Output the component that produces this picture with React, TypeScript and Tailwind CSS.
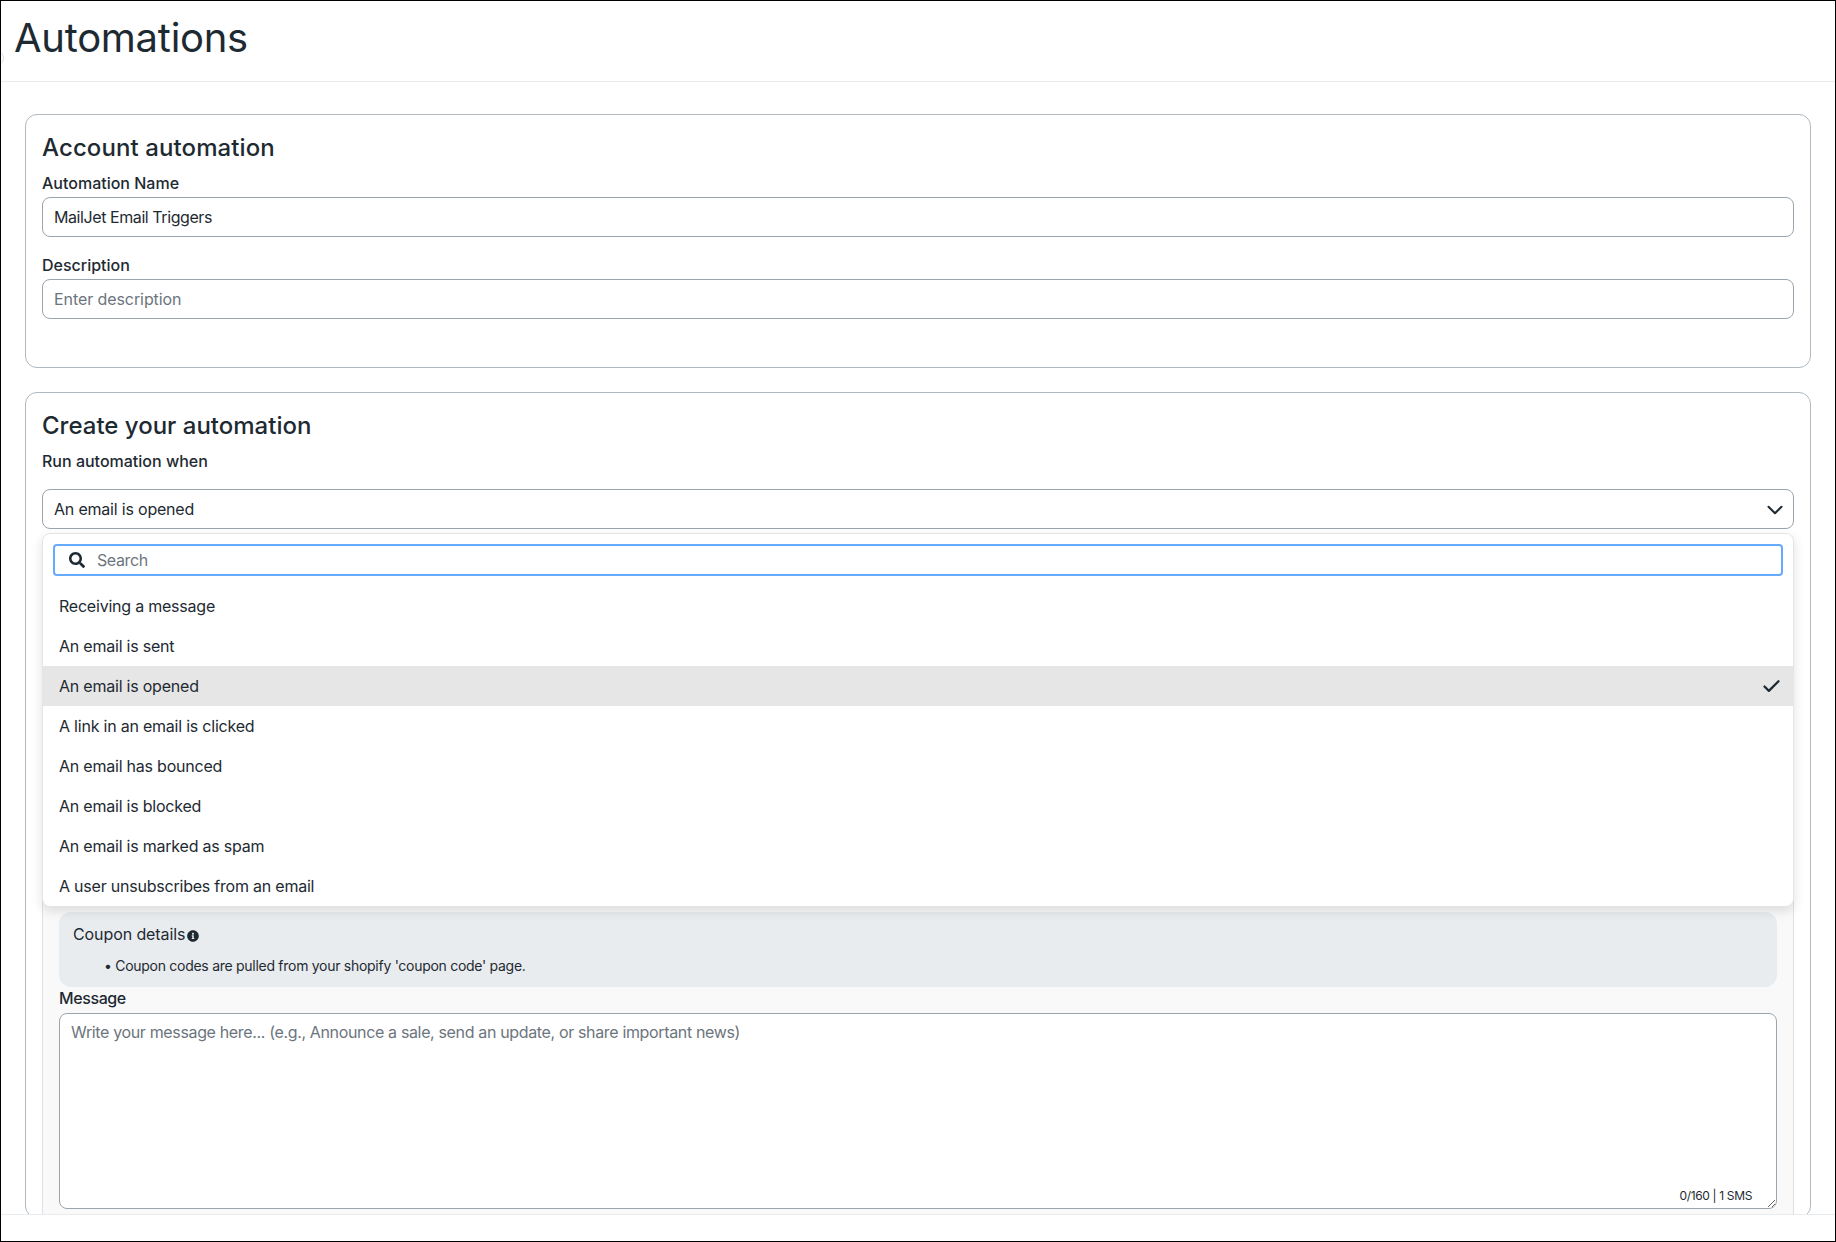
import { Check, ChevronDown } from 'lucide-react';

const triggers = [
  'Receiving a message',
  'An email is sent',
  'An email is opened',
  'A link in an email is clicked',
  'An email has bounced',
  'An email is blocked',
  'An email is marked as spam',
  'A user unsubscribes from an email',
];

const fieldClass =
  'block h-10 w-full rounded-[8px] border border-[#9aa5ae] bg-white px-[11px] text-[16px] text-[#1e2a32] placeholder:text-[#6c757d] outline-none';

export default function App() {
  return (
    <div className="relative flex h-[1242px] w-[1836px] flex-col overflow-hidden border border-black bg-white font-['Inter',sans-serif] text-[#1e2a32]">
      <div className="absolute left-[-13px] top-[49px] h-4 w-4 rounded-full border border-[#dee2e6]" />
      <header className="flex h-[81px] shrink-0 items-center border-b border-[#e9ecef] pl-[13px] pb-[7px]">
        <h1 className="text-[40px] font-normal leading-none tracking-[-0.27px]">Automations</h1>
      </header>

      <main className="flex min-h-0 flex-1 flex-col gap-[24px] overflow-hidden px-[24px] pt-[32px]">
        <section className="h-[254px] shrink-0 rounded-[12px] border border-[#b0b8c0] px-[16px] pt-[17px]">
          <h2 className="text-[24px] font-medium leading-[32px] tracking-[0.1px]">Account automation</h2>
          <label className="mt-[7px] block text-[16px] font-medium leading-[24px]">Automation Name</label>
          <input className={`mt-[2px] tracking-[-0.42px] ${fieldClass}`} readOnly value="MailJet Email Triggers" />
          <label className="mt-[16px] block text-[16px] font-medium leading-[24px]">Description</label>
          <input className={`mt-[2px] tracking-[-0.08px] ${fieldClass}`} readOnly placeholder="Enter description" />
        </section>

        <section className="relative shrink-0 rounded-[12px] border border-[#b0b8c0] px-[16px] pt-[17px]">
          <h2 className="text-[24px] font-medium leading-[32px]">Create your automation</h2>
          <label className="mt-[7px] block text-[16px] font-medium leading-[24px]">Run automation when</label>
          <div className="relative mt-[16px]">
            <div className="flex h-10 items-center justify-between rounded-[8px] border border-[#9aa5ae] bg-white pl-[11px] pr-[5px] text-[16px]">
              <span className="tracking-[-0.2px]">An email is opened</span>
              <ChevronDown size={26} strokeWidth={1.9} className="mt-[1px]" />
            </div>

            <div className="absolute left-0 right-0 top-[44px] z-10 rounded-[8px] border border-[#e3e6e9] bg-white shadow-[0_4px_12px_rgba(0,0,0,0.12)]">
              <div className="px-[10px] pt-[10px]">
                <div className="flex h-[32px] items-center rounded-[4px] border-2 border-[#66aaff] pl-[14px]">
                  <SearchIcon />
                  <input className="ml-[12px] min-w-0 flex-1 bg-transparent text-[16px] tracking-[-0.4px] outline-none placeholder:text-[#6c757d]" readOnly placeholder="Search" />
                </div>
              </div>
              <ul className="mt-[10px]">
                {triggers.map((t) => (
                  <li
                    key={t}
                    className={`flex h-10 items-center justify-between pl-[16px] pr-[11px] text-[16px] ${t === 'An email is opened' ? 'bg-[#e6e6e6]' : ''}`}
                  >
                    <span className="tracking-[-0.22px]">{t}</span>
                    {t === 'An email is opened' && <Check size={21} strokeWidth={2.6} />}
                  </li>
                ))}
              </ul>
            </div>

            <div className="mt-[16px] rounded-t-[8px] border border-b-0 border-[#dee2e6] bg-[#f9f9fa] px-[16px] pb-[8px] pt-[366px]">
              <div className="h-[75px] rounded-[12px] bg-[#e9ecef] pl-[14px] pt-[10px]">
                <div className="flex items-center text-[16px] leading-[24px] tracking-[-0.1px]">
                  Coupon details
                  <InfoIcon />
                </div>
                <p className="mt-[10px] pl-[31px] text-[14px] leading-[20px] tracking-[-0.28px]">• Coupon codes are pulled from your shopify 'coupon code' page.</p>
              </div>
              <label className="block text-[16px] font-medium leading-[22px] tracking-[-0.4px]">Message</label>
              <div className="relative mt-[4px]">
                <textarea
                  className="block h-[196px] w-full resize-y rounded-[8px] border border-[#9aa5ae] bg-white px-[11px] py-[6px] text-[16px] tracking-[-0.35px] outline-none placeholder:text-[#6c757d]"
                  readOnly
                  placeholder="Write your message here... (e.g., Announce a sale, send an update, or share important news)"
                />
                <span className="absolute bottom-[5px] right-[25px] text-[12px] leading-[16px] tracking-[-0.35px]">0/160 | 1 SMS</span>
              </div>
            </div>
          </div>
        </section>
      </main>

      <footer className="h-[27px] shrink-0 border-t border-[#e9ecef] bg-white" />
    </div>
  );
}

function SearchIcon() {
  return (
    <svg width="16" height="16" viewBox="0 0 512 512" fill="#1e2a32" className="shrink-0">
      <path d="M505 442.7L405.3 343c-4.5-4.5-10.6-7-17-7H372c27.6-35.3 44-79.7 44-128C416 93.1 322.9 0 208 0S0 93.1 0 208s93.1 208 208 208c48.3 0 92.7-16.4 128-44v16.3c0 6.4 2.5 12.5 7 17l99.7 99.7c9.4 9.4 24.6 9.4 33.9 0l28.3-28.3c9.4-9.4 9.4-24.6.1-34zM208 336c-70.7 0-128-57.2-128-128 0-70.7 57.2-128 128-128 70.7 0 128 57.2 128 128 0 70.7-57.2 128-128 128z" />
    </svg>
  );
}

function InfoIcon() {
  return (
    <svg width="12" height="12" viewBox="0 0 512 512" fill="#1e2a32" className="ml-[2px] mt-[3px] shrink-0">
      <path d="M256 8C119 8 8 119 8 256s111 248 248 248 248-111 248-248S393 8 256 8zm0 110c23.2 0 42 18.8 42 42s-18.800 42-42 42-42-18.800-42-42 18.800-42 42-42zm56 254c0 6.600-5.400 12-12 12h-88c-6.600 0-12-5.400-12-12v-24c0-6.600 5.400-12 12-12h12v-64h-12c-6.600 0-12-5.400-12-12v-24c0-6.600 5.400-12 12-12h64c6.600 0 12 5.400 12 12v100h12c6.600 0 12 5.400 12 12v24z" />
    </svg>
  );
}
